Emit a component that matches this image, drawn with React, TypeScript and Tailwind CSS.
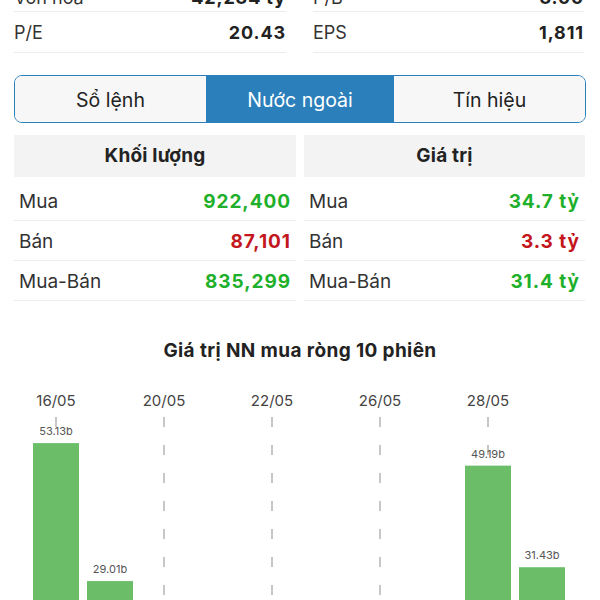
import React from 'react'

const font = { fontFamily: 'Inter, "Noto Sans", "Liberation Sans", sans-serif' }

interface StatRow {
  label: string
  value: string
}

const topRows: { left: StatRow; right: StatRow }[] = [
  { left: { label: 'Vốn hóa', value: '42,234 tỷ' }, right: { label: 'P/B', value: '3.00' } },
  { left: { label: 'P/E', value: '20.43' }, right: { label: 'EPS', value: '1,811' } },
]

const volumeRows = [
  { label: 'Mua', value: '922,400', color: 'text-[#1fb02b]' },
  { label: 'Bán', value: '87,101', color: 'text-[#c3161d]' },
  { label: 'Mua-Bán', value: '835,299', color: 'text-[#1fb02b]' },
]

const valueRows = [
  { label: 'Mua', value: '34.7 tỷ', color: 'text-[#1fb02b]' },
  { label: 'Bán', value: '3.3 tỷ', color: 'text-[#c3161d]' },
  { label: 'Mua-Bán', value: '31.4 tỷ', color: 'text-[#1fb02b]' },
]

const sessions = [
  { date: '16/05', value: 53.13, showDate: true },
  { date: '19/05', value: 29.01, showDate: false },
  { date: '20/05', value: 12.4, showDate: true },
  { date: '21/05', value: 8.72, showDate: false },
  { date: '22/05', value: 15.3, showDate: true },
  { date: '23/05', value: 6.05, showDate: false },
  { date: '26/05', value: 20.61, showDate: true },
  { date: '27/05', value: 10.18, showDate: false },
  { date: '28/05', value: 49.19, showDate: true },
  { date: '29/05', value: 31.43, showDate: false },
]

function NetBuyChart() {
  // svg sits at page y = 365
  const baseline = 382
  const scale = 5.72
  const slot = 54
  const left = 29
  return (
    <svg width="600" height="400" className="block">
      {sessions.map((s, i) => {
        const cx = left + slot * i + slot / 2
        return s.showDate ? (
          <g key={`d-${s.date}`}>
            <text x={cx} y={41} textAnchor="middle" fontSize="15" fill="#444" style={font}>
              {s.date}
            </text>
            <line x1={cx} x2={cx} y1={52} y2={baseline} stroke="#b5b5b5" strokeWidth="1.5" strokeDasharray="10 18" />
          </g>
        ) : null
      })}
      {sessions.map((s, i) => {
        const cx = left + slot * i + slot / 2
        const h = s.value * scale
        const top = baseline - h
        return (
          <g key={`b-${s.date}`}>
            <text x={cx} y={top - 8} textAnchor="middle" fontSize="11" fill="#555" style={font}>
              {s.value.toFixed(2)}b
            </text>
            <rect x={cx - 23} y={top} width={46} height={h} fill="#6cbd68" />
          </g>
        )
      })}
    </svg>
  )
}

function StatCell({ row, cut }: { row: StatRow; cut?: boolean }) {
  return (
    <div className={`flex justify-between border-b border-[#ececec] ${cut ? 'h-[12px] items-end overflow-hidden' : 'h-[41px] items-center'}`}>
      <span className={`text-[18px] text-[#333] ${cut ? 'mb-[2px] leading-[22px]' : ''}`}>{row.label}</span>
      <span className={`text-[18px] font-bold tracking-[0.05em] text-[#222] ${cut ? 'mb-[2px] leading-[22px]' : ''}`}>{row.value}</span>
    </div>
  )
}

function FlowTable({ title, rows }: { title: string; rows: typeof volumeRows }) {
  return (
    <div className="flex flex-col">
      <div className="flex h-[42px] items-center justify-center bg-[#f3f3f3] pt-[1px] text-[19px] font-bold tracking-[0.01em] text-[#222]">{title}</div>
      <div className="mt-[4px]">
        {rows.map((r) => (
          <div key={r.label} className="flex h-[40px] items-center justify-between border-b border-[#ececec] px-[5px] pt-[3px]">
            <span className="text-[19px] text-[#333]">{r.label}</span>
            <span className={`text-[19px] font-bold tracking-[0.05em] ${r.color}`}>{r.value}</span>
          </div>
        ))}
      </div>
    </div>
  )
}

export default function App() {
  return (
    <main className="w-[600px] overflow-hidden bg-white" style={font}>
      <section className="grid grid-cols-[272px_271px] gap-x-[27px] px-[14px]">
        {topRows.map((r, i) => (
          <React.Fragment key={r.left.label}>
            <StatCell row={r.left} cut={i === 0} />
            <StatCell row={r.right} cut={i === 0} />
          </React.Fragment>
        ))}
      </section>

      <nav className="mx-[14px] mt-[22px] flex h-[48px] overflow-hidden rounded-[8px] border border-[#2b7fba]">
        <button type="button" className="flex-1 bg-[#f7f7f7] pt-[3px] text-[19.5px] text-[#222]">Sổ lệnh</button>
        <button type="button" className="w-[188px] bg-[#2b7fba] pt-[3px] text-[19.5px] text-white">Nước ngoài</button>
        <button type="button" className="flex-1 bg-[#f7f7f7] pt-[3px] text-[19.5px] text-[#222]">Tín hiệu</button>
      </nav>

      <section className="mt-[12px] grid grid-cols-[282px_281px] gap-x-[8px] px-[14px]">
        <FlowTable title="Khối lượng" rows={volumeRows} />
        <FlowTable title="Giá trị" rows={valueRows} />
      </section>

      <h2 className="mt-[36px] h-[28px] text-center text-[19px] font-bold leading-[28px] tracking-[0.02em] text-[#222]">
        Giá trị NN mua ròng 10 phiên
      </h2>
      <NetBuyChart />
    </main>
  )
}
